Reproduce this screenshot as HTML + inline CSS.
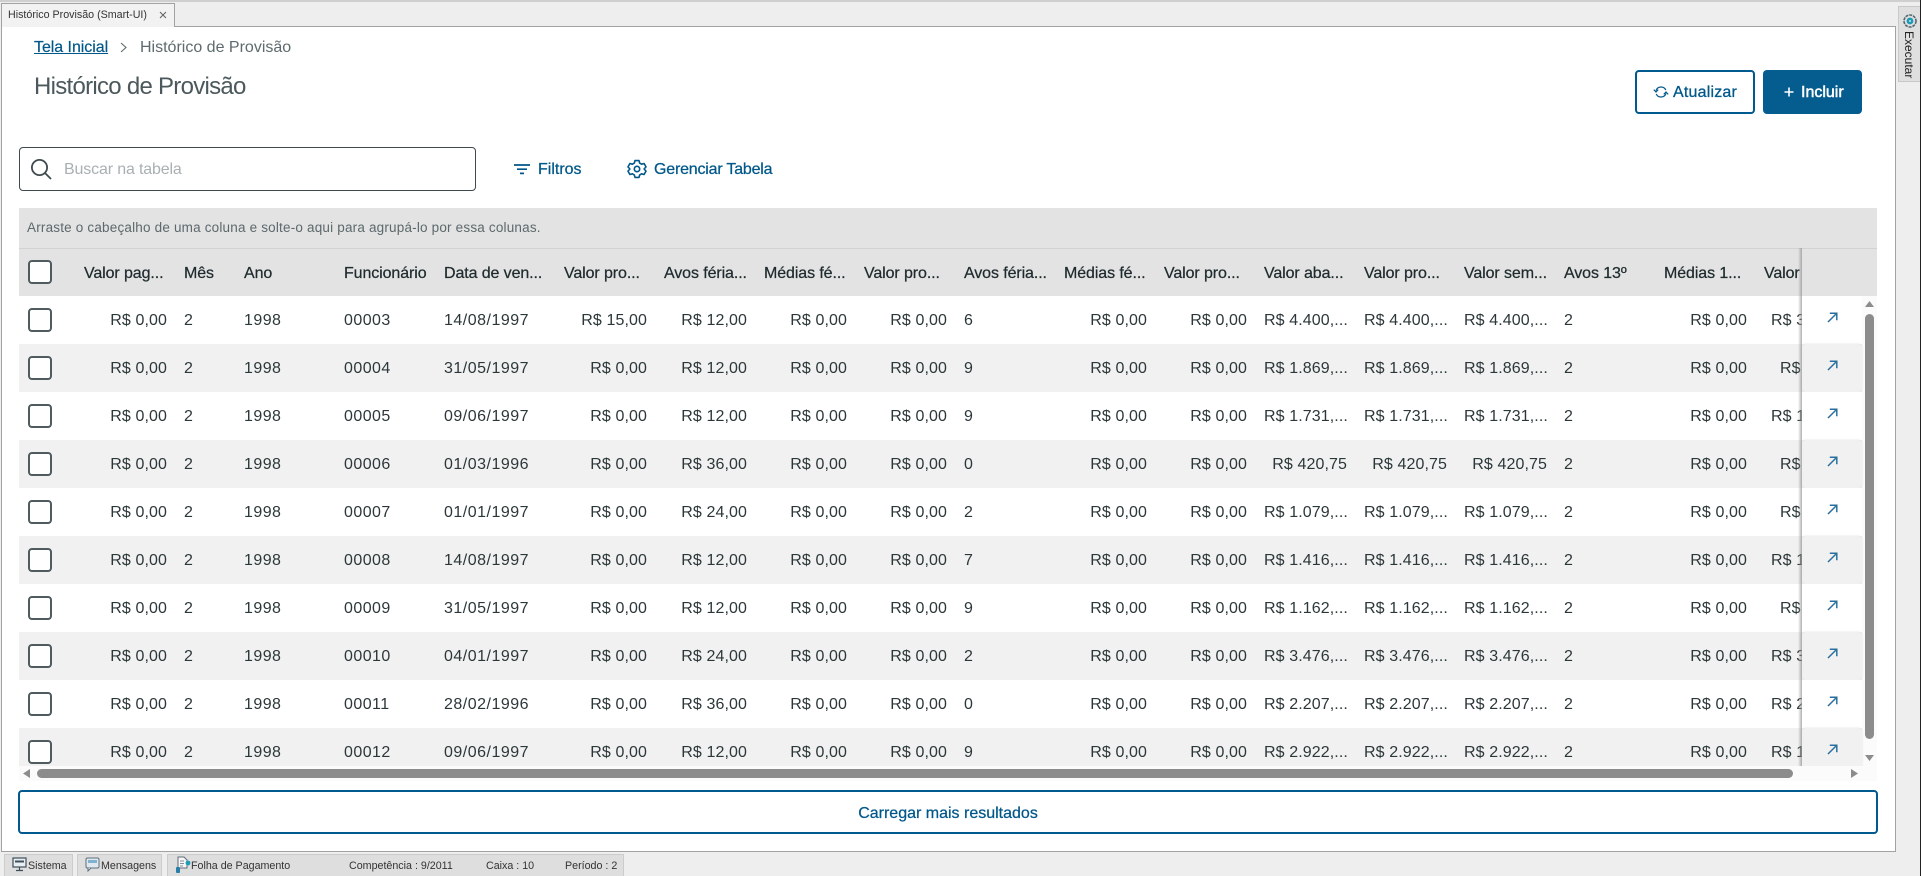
<!DOCTYPE html>
<html lang="pt"><head><meta charset="utf-8"><title>Histórico de Provisão</title>
<style>
html,body{margin:0;padding:0}
body{width:1921px;height:876px;overflow:hidden;background:#eee;position:relative;font-family:"Liberation Sans",sans-serif;color:#2c3739;font-size:16px}
.a{position:absolute;white-space:nowrap}
svg{position:absolute;display:block}
.row,.hd{position:absolute;left:19px;width:1843px;height:48px;display:grid;grid-template-columns:65px 100px 60px 100px 100px 120px repeat(13,100px);align-items:center;line-height:48px;overflow:hidden;letter-spacing:.1px}
.hd{top:248px;width:1783px;height:48px;color:#1f2b2e;-webkit-text-stroke:.25px #1f2b2e;letter-spacing:-.1px}
.row span,.hd span{white-space:nowrap;overflow:hidden;display:block;position:relative;top:1px}
.hd span{top:2px}
.row span:first-child,.hd span:first-child{top:0}
.row span:nth-child(3),.row span:nth-child(4),.row span:nth-child(5){letter-spacing:.45px}
.row span:nth-child(6){letter-spacing:.5px}
.row .r{text-align:right;padding-right:17px}
.cb{display:block;box-sizing:border-box;width:24px;height:24px;border:2px solid #4f5b5e;border-radius:4px;background:#fff;margin-left:9px}
.act{position:absolute;left:1802px;width:60px;height:48px;background:#fff}
.act.g{background:#f1f1f1;border-radius:4px;box-shadow:0 0 2px rgba(0,0,0,.12)}
.act svg{left:25px;top:16px}
.st{position:absolute;top:854px;height:22px;background:#dedede;border:1px solid #ccc;border-bottom:0;box-sizing:border-box}
.sx{position:absolute;white-space:nowrap;font-size:10.7px;line-height:14px;top:859px;color:#333}
</style></head><body>

<div class="a" style="left:0;top:0;width:1921px;height:2px;background:#cfcfcf"></div>
<div class="a" style="left:1920px;top:0;width:1px;height:876px;background:#222"></div>

<!-- content frame -->
<div class="a" style="left:1px;top:26px;width:1893px;height:824px;background:#fff;border:1px solid #a2a2a2"></div>
<!-- tab -->
<div class="a" style="left:1px;top:3px;width:174px;height:24px;background:#f2f2f2;border:1px solid #a2a2a2;border-bottom:0;box-sizing:border-box"></div>
<div class="a" style="left:8px;top:8px;font-size:10.7px;line-height:14px;color:#333">Histórico Provisão (Smart-UI)</div>
<svg style="left:159px;top:11px" width="8" height="8" viewBox="0 0 8 8"><path d="M1 1L7 7M7 1L1 7" stroke="#666" stroke-width="1.1"/></svg>

<!-- executar -->
<div class="a" style="left:1898px;top:6px;width:22px;height:76px;background:#dfdfdf;border:1px solid #c8c8c8;border-right:0;box-sizing:border-box"></div>
<svg style="left:1902px;top:13px" width="16" height="16" viewBox="0 0 16 16"><circle cx="8" cy="8" r="6" fill="none" stroke="#55686f" stroke-width="1.6" stroke-dasharray="3 .9"/><circle cx="8" cy="8" r="3.4" fill="#1d9ab5"/><circle cx="8" cy="8" r="1" fill="#bfe6ee"/></svg>
<div class="a" style="left:1901px;top:31px;writing-mode:vertical-rl;font-size:12px;line-height:16px;color:#222">Executar</div>

<!-- breadcrumb -->
<div class="a" style="left:34px;top:39px;line-height:18px;color:#00588a;text-decoration:underline;-webkit-text-stroke:.2px #00588a;letter-spacing:-.05px">Tela Inicial</div>
<svg style="left:119px;top:42px" width="9" height="11" viewBox="0 0 9 11"><path d="M2 1L7 5.5L2 10" fill="none" stroke="#5e6a6d" stroke-width="1.1"/></svg>
<div class="a" style="left:140px;top:39px;line-height:18px;color:#5e6a6d">Histórico de Provisão</div>
<div class="a" style="left:34px;top:73px;font-size:24px;line-height:28px;color:#4c595c;letter-spacing:-.72px">Histórico de Provisão</div>

<!-- buttons -->
<div class="a" style="left:1635px;top:70px;width:120px;height:44px;box-sizing:border-box;border:2px solid #005a8f;border-radius:4px;background:#fff"></div>
<svg style="left:1653px;top:84px" width="16" height="16" viewBox="0 0 16 16" fill="none" stroke="#00588a" stroke-width="1.2"><path d="M3 6.6A5.3 5.3 0 0 1 12.8 6"/><path d="M13 9.4A5.3 5.3 0 0 1 3.2 10"/><path d="M0.8 5.6L3 8L5.2 5.6" /><path d="M10.8 10.4L13 8L15.2 10.4"/></svg>
<div class="a" style="left:1673px;top:84px;line-height:18px;color:#00588a;-webkit-text-stroke:.3px #00588a;letter-spacing:.2px">Atualizar</div>
<div class="a" style="left:1763px;top:70px;width:99px;height:44px;border-radius:4px;background:#055c8e"></div>
<svg style="left:1784px;top:87px" width="10" height="10" viewBox="0 0 10 10"><path d="M5 .5V9.5M.5 5H9.5" stroke="#fff" stroke-width="1.6"/></svg>
<div class="a" style="left:1801px;top:84px;line-height:18px;color:#fff;-webkit-text-stroke:.5px #fff">Incluir</div>

<!-- search -->
<div class="a" style="left:19px;top:147px;width:457px;height:44px;box-sizing:border-box;border:1px solid #3e4a4d;border-radius:4px;background:#fff"></div>
<svg style="left:30px;top:158px" width="22" height="22" viewBox="0 0 22 22" fill="none" stroke="#3e4a4d" stroke-width="1.8"><circle cx="9.5" cy="9.5" r="7.6"/><path d="M15 15L21 21"/></svg>
<div class="a" style="left:64px;top:161px;line-height:18px;color:#a9b0b2;letter-spacing:-.15px">Buscar na tabela</div>

<!-- filtros -->
<svg style="left:514px;top:163px" width="16" height="12" viewBox="0 0 16 12"><path d="M0 2H16M3 6.2H13M6 10.4H10" stroke="#00588a" stroke-width="1.7"/></svg>
<div class="a" style="left:538px;top:161px;line-height:18px;color:#00588a;-webkit-text-stroke:.25px #00588a">Filtros</div>
<svg style="left:627px;top:159px" width="20" height="20" viewBox="0 0 20 20" fill="none" stroke="#00588a" stroke-width="1.6" stroke-linejoin="round"><path d="M8 1.6H12L12.7 4.1L14.6 5.2L17.1 4.5L19 7.9L17.2 9.9V10.1L19 12.1L17.1 15.5L14.6 14.8L12.7 15.9L12 18.4H8L7.3 15.9L5.4 14.8L2.9 15.5L1 12.1L2.8 10.1V9.9L1 7.9L2.9 4.5L5.4 5.2L7.3 4.1Z"/><circle cx="10" cy="10" r="2.7"/></svg>
<div class="a" style="left:654px;top:161px;line-height:18px;color:#00588a;-webkit-text-stroke:.25px #00588a;letter-spacing:-.2px">Gerenciar Tabela</div>

<!-- group bar + header -->
<div class="a" style="left:19px;top:208px;width:1858px;height:88px;background:#e3e3e3"></div>
<div class="a" style="left:19px;top:248px;width:1858px;height:1px;background:#d2d2d2"></div>
<div class="a" style="left:27px;top:220px;font-size:13.5px;line-height:16px;color:#5c686b;letter-spacing:.19px">Arraste o cabeçalho de uma coluna e solte-o aqui para agrupá-lo por essa colunas.</div>

<div class="hd"><span><i class="cb"></i></span><span>Valor pag...</span><span>Mês</span><span>Ano</span><span>Funcionário</span><span>Data de ven...</span><span>Valor pro...</span><span>Avos féria...</span><span>Médias fé...</span><span>Valor pro...</span><span>Avos féria...</span><span>Médias fé...</span><span>Valor pro...</span><span>Valor aba...</span><span>Valor pro...</span><span>Valor sem...</span><span>Avos 13º</span><span>Médias 1...</span><span>Valor</span></div>

<!-- tracks -->
<div class="a" style="left:1862px;top:296px;width:15px;height:485px;background:#fbfbfb"></div>
<div class="a" style="left:19px;top:766px;width:1858px;height:15px;background:#fbfbfb"></div>

<!-- rows -->
<div class="a" style="left:0;top:296px;width:1921px;height:470px;overflow:hidden">
<div style="position:absolute;left:0;top:0;width:1921px;height:480px">
<div class="row" style="top:0"><span><i class="cb"></i></span><span class="r">R$ 0,00</span><span>2</span><span>1998</span><span>00003</span><span>14/08/1997</span><span class="r">R$ 15,00</span><span class="r">R$ 12,00</span><span class="r">R$ 0,00</span><span class="r">R$ 0,00</span><span>6</span><span class="r">R$ 0,00</span><span class="r">R$ 0,00</span><span>R$ 4.400,...</span><span>R$ 4.400,...</span><span>R$ 4.400,...</span><span>2</span><span class="r">R$ 0,00</span><span style="padding-left:7px">R$ 3.666,67</span></div>
<div class="row" style="top:48px;background:#f1f1f1"><span><i class="cb"></i></span><span class="r">R$ 0,00</span><span>2</span><span>1998</span><span>00004</span><span>31/05/1997</span><span class="r">R$ 0,00</span><span class="r">R$ 12,00</span><span class="r">R$ 0,00</span><span class="r">R$ 0,00</span><span>9</span><span class="r">R$ 0,00</span><span class="r">R$ 0,00</span><span>R$ 1.869,...</span><span>R$ 1.869,...</span><span>R$ 1.869,...</span><span>2</span><span class="r">R$ 0,00</span><span style="padding-left:16px">R$ 155,75</span></div>
<div class="row" style="top:96px;background:#fff"><span><i class="cb"></i></span><span class="r">R$ 0,00</span><span>2</span><span>1998</span><span>00005</span><span>09/06/1997</span><span class="r">R$ 0,00</span><span class="r">R$ 12,00</span><span class="r">R$ 0,00</span><span class="r">R$ 0,00</span><span>9</span><span class="r">R$ 0,00</span><span class="r">R$ 0,00</span><span>R$ 1.731,...</span><span>R$ 1.731,...</span><span>R$ 1.731,...</span><span>2</span><span class="r">R$ 0,00</span><span style="padding-left:7px">R$ 1.442,50</span></div>
<div class="row" style="top:144px;background:#f1f1f1"><span><i class="cb"></i></span><span class="r">R$ 0,00</span><span>2</span><span>1998</span><span>00006</span><span>01/03/1996</span><span class="r">R$ 0,00</span><span class="r">R$ 36,00</span><span class="r">R$ 0,00</span><span class="r">R$ 0,00</span><span>0</span><span class="r">R$ 0,00</span><span class="r">R$ 0,00</span><span class="r">R$ 420,75</span><span class="r">R$ 420,75</span><span class="r">R$ 420,75</span><span>2</span><span class="r">R$ 0,00</span><span style="padding-left:16px">R$ 350,62</span></div>
<div class="row" style="top:192px;background:#fff"><span><i class="cb"></i></span><span class="r">R$ 0,00</span><span>2</span><span>1998</span><span>00007</span><span>01/01/1997</span><span class="r">R$ 0,00</span><span class="r">R$ 24,00</span><span class="r">R$ 0,00</span><span class="r">R$ 0,00</span><span>2</span><span class="r">R$ 0,00</span><span class="r">R$ 0,00</span><span>R$ 1.079,...</span><span>R$ 1.079,...</span><span>R$ 1.079,...</span><span>2</span><span class="r">R$ 0,00</span><span style="padding-left:16px">R$ 899,58</span></div>
<div class="row" style="top:240px;background:#f1f1f1"><span><i class="cb"></i></span><span class="r">R$ 0,00</span><span>2</span><span>1998</span><span>00008</span><span>14/08/1997</span><span class="r">R$ 0,00</span><span class="r">R$ 12,00</span><span class="r">R$ 0,00</span><span class="r">R$ 0,00</span><span>7</span><span class="r">R$ 0,00</span><span class="r">R$ 0,00</span><span>R$ 1.416,...</span><span>R$ 1.416,...</span><span>R$ 1.416,...</span><span>2</span><span class="r">R$ 0,00</span><span style="padding-left:7px">R$ 1.180,33</span></div>
<div class="row" style="top:288px;background:#fff"><span><i class="cb"></i></span><span class="r">R$ 0,00</span><span>2</span><span>1998</span><span>00009</span><span>31/05/1997</span><span class="r">R$ 0,00</span><span class="r">R$ 12,00</span><span class="r">R$ 0,00</span><span class="r">R$ 0,00</span><span>9</span><span class="r">R$ 0,00</span><span class="r">R$ 0,00</span><span>R$ 1.162,...</span><span>R$ 1.162,...</span><span>R$ 1.162,...</span><span>2</span><span class="r">R$ 0,00</span><span style="padding-left:16px">R$ 968,75</span></div>
<div class="row" style="top:336px;background:#f1f1f1"><span><i class="cb"></i></span><span class="r">R$ 0,00</span><span>2</span><span>1998</span><span>00010</span><span>04/01/1997</span><span class="r">R$ 0,00</span><span class="r">R$ 24,00</span><span class="r">R$ 0,00</span><span class="r">R$ 0,00</span><span>2</span><span class="r">R$ 0,00</span><span class="r">R$ 0,00</span><span>R$ 3.476,...</span><span>R$ 3.476,...</span><span>R$ 3.476,...</span><span>2</span><span class="r">R$ 0,00</span><span style="padding-left:7px">R$ 3.000,00</span></div>
<div class="row" style="top:384px;background:#fff"><span><i class="cb"></i></span><span class="r">R$ 0,00</span><span>2</span><span>1998</span><span>00011</span><span>28/02/1996</span><span class="r">R$ 0,00</span><span class="r">R$ 36,00</span><span class="r">R$ 0,00</span><span class="r">R$ 0,00</span><span>0</span><span class="r">R$ 0,00</span><span class="r">R$ 0,00</span><span>R$ 2.207,...</span><span>R$ 2.207,...</span><span>R$ 2.207,...</span><span>2</span><span class="r">R$ 0,00</span><span style="padding-left:7px">R$ 2.000,00</span></div>
<div class="row" style="top:432px;background:#f1f1f1"><span><i class="cb"></i></span><span class="r">R$ 0,00</span><span>2</span><span>1998</span><span>00012</span><span>09/06/1997</span><span class="r">R$ 0,00</span><span class="r">R$ 12,00</span><span class="r">R$ 0,00</span><span class="r">R$ 0,00</span><span>9</span><span class="r">R$ 0,00</span><span class="r">R$ 0,00</span><span>R$ 2.922,...</span><span>R$ 2.922,...</span><span>R$ 2.922,...</span><span>2</span><span class="r">R$ 0,00</span><span style="padding-left:7px">R$ 1.900,00</span></div>

<div class="act" style="top:0"><svg width="11" height="11" viewBox="0 0 11 11" fill="none" stroke="#2a6f9f" stroke-width="1.5"><path d="M1 10L9.5 1.5M2.8 1.2H9.8V8.2"/></svg></div>
<div class="act g" style="top:48px"><svg width="11" height="11" viewBox="0 0 11 11" fill="none" stroke="#2a6f9f" stroke-width="1.5"><path d="M1 10L9.5 1.5M2.8 1.2H9.8V8.2"/></svg></div>
<div class="act" style="top:96px"><svg width="11" height="11" viewBox="0 0 11 11" fill="none" stroke="#2a6f9f" stroke-width="1.5"><path d="M1 10L9.5 1.5M2.8 1.2H9.8V8.2"/></svg></div>
<div class="act g" style="top:144px"><svg width="11" height="11" viewBox="0 0 11 11" fill="none" stroke="#2a6f9f" stroke-width="1.5"><path d="M1 10L9.5 1.5M2.8 1.2H9.8V8.2"/></svg></div>
<div class="act" style="top:192px"><svg width="11" height="11" viewBox="0 0 11 11" fill="none" stroke="#2a6f9f" stroke-width="1.5"><path d="M1 10L9.5 1.5M2.8 1.2H9.8V8.2"/></svg></div>
<div class="act g" style="top:240px"><svg width="11" height="11" viewBox="0 0 11 11" fill="none" stroke="#2a6f9f" stroke-width="1.5"><path d="M1 10L9.5 1.5M2.8 1.2H9.8V8.2"/></svg></div>
<div class="act" style="top:288px"><svg width="11" height="11" viewBox="0 0 11 11" fill="none" stroke="#2a6f9f" stroke-width="1.5"><path d="M1 10L9.5 1.5M2.8 1.2H9.8V8.2"/></svg></div>
<div class="act g" style="top:336px"><svg width="11" height="11" viewBox="0 0 11 11" fill="none" stroke="#2a6f9f" stroke-width="1.5"><path d="M1 10L9.5 1.5M2.8 1.2H9.8V8.2"/></svg></div>
<div class="act" style="top:384px"><svg width="11" height="11" viewBox="0 0 11 11" fill="none" stroke="#2a6f9f" stroke-width="1.5"><path d="M1 10L9.5 1.5M2.8 1.2H9.8V8.2"/></svg></div>
<div class="act g" style="top:432px"><svg width="11" height="11" viewBox="0 0 11 11" fill="none" stroke="#2a6f9f" stroke-width="1.5"><path d="M1 10L9.5 1.5M2.8 1.2H9.8V8.2"/></svg></div>
</div></div>

<!-- sticky shadow -->
<div class="a" style="left:1798px;top:248px;width:4px;height:518px;background:linear-gradient(90deg,rgba(150,150,150,0),rgba(150,150,150,.75))"></div>

<!-- vertical scrollbar -->
<svg style="left:1865px;top:301px" width="9" height="6" viewBox="0 0 9 6"><path d="M4.5 0L9 6H0Z" fill="#8c8c8c"/></svg>
<div class="a" style="left:1865px;top:314px;width:9px;height:425px;background:#8c8c8c;border-radius:5px"></div>
<svg style="left:1865px;top:755px" width="9" height="6" viewBox="0 0 9 6"><path d="M0 0H9L4.5 6Z" fill="#8c8c8c"/></svg>
<!-- horizontal scrollbar -->
<svg style="left:23px;top:769px" width="7" height="9" viewBox="0 0 7 9"><path d="M7 0V9L0 4.5Z" fill="#8c8c8c"/></svg>
<div class="a" style="left:37px;top:769px;width:1756px;height:9px;background:#8c8c8c;border-radius:5px"></div>
<svg style="left:1851px;top:769px" width="7" height="9" viewBox="0 0 7 9"><path d="M0 0V9L7 4.5Z" fill="#8c8c8c"/></svg>

<!-- load more -->
<div class="a" style="left:18px;top:790px;width:1860px;height:44px;box-sizing:border-box;border:2px solid #005a8f;border-radius:4px;background:#fff;text-align:center;line-height:43px;color:#00588a;-webkit-text-stroke:.25px #00588a">Carregar mais resultados</div>

<!-- status bar -->
<div class="st" style="left:4px;width:69px"></div>
<div class="st" style="left:77px;width:85px"></div>
<div class="st" style="left:167px;width:457px"></div>
<svg style="left:12px;top:857px" width="15" height="15" viewBox="0 0 15 15"><rect x="1" y="1" width="13" height="9" fill="#e8eef2" stroke="#3d4f5c" stroke-width="1.2"/><rect x="3" y="3.5" width="9" height="2" fill="#3d4f5c"/><path d="M7.5 10V13M4 13.5H11" stroke="#3d4f5c" stroke-width="1.2"/></svg>
<svg style="left:85px;top:857px" width="15" height="15" viewBox="0 0 15 15"><rect x="1" y="1" width="13" height="10" rx="1.5" fill="#dfe8ee" stroke="#5d6f7a"/><rect x="3" y="3" width="9" height="3" fill="#7fb1d1"/><path d="M3 11L3 14L6 11" fill="#dfe8ee" stroke="#5d6f7a"/></svg>
<svg style="left:175px;top:856px" width="16" height="18" viewBox="0 0 16 18"><path d="M3 1H9L12 4V12H3Z" fill="#f6f6f6" stroke="#5d6f7a"/><path d="M5 5H9M5 7.5H9M5 10H8" stroke="#5d6f7a" stroke-width=".8"/><rect x="1" y="11" width="4" height="6" rx="1" fill="#2a7fa8"/><circle cx="13" cy="7" r="2.4" fill="#1d9ab5"/></svg>
<div class="sx" style="left:28px">Sistema</div>
<div class="sx" style="left:101px">Mensagens</div>
<div class="sx" style="left:191px">Folha de Pagamento</div>
<div class="sx" style="left:349px">Competência : 9/2011</div>
<div class="sx" style="left:486px">Caixa : 10</div>
<div class="sx" style="left:565px">Período : 2</div>
</body></html>
